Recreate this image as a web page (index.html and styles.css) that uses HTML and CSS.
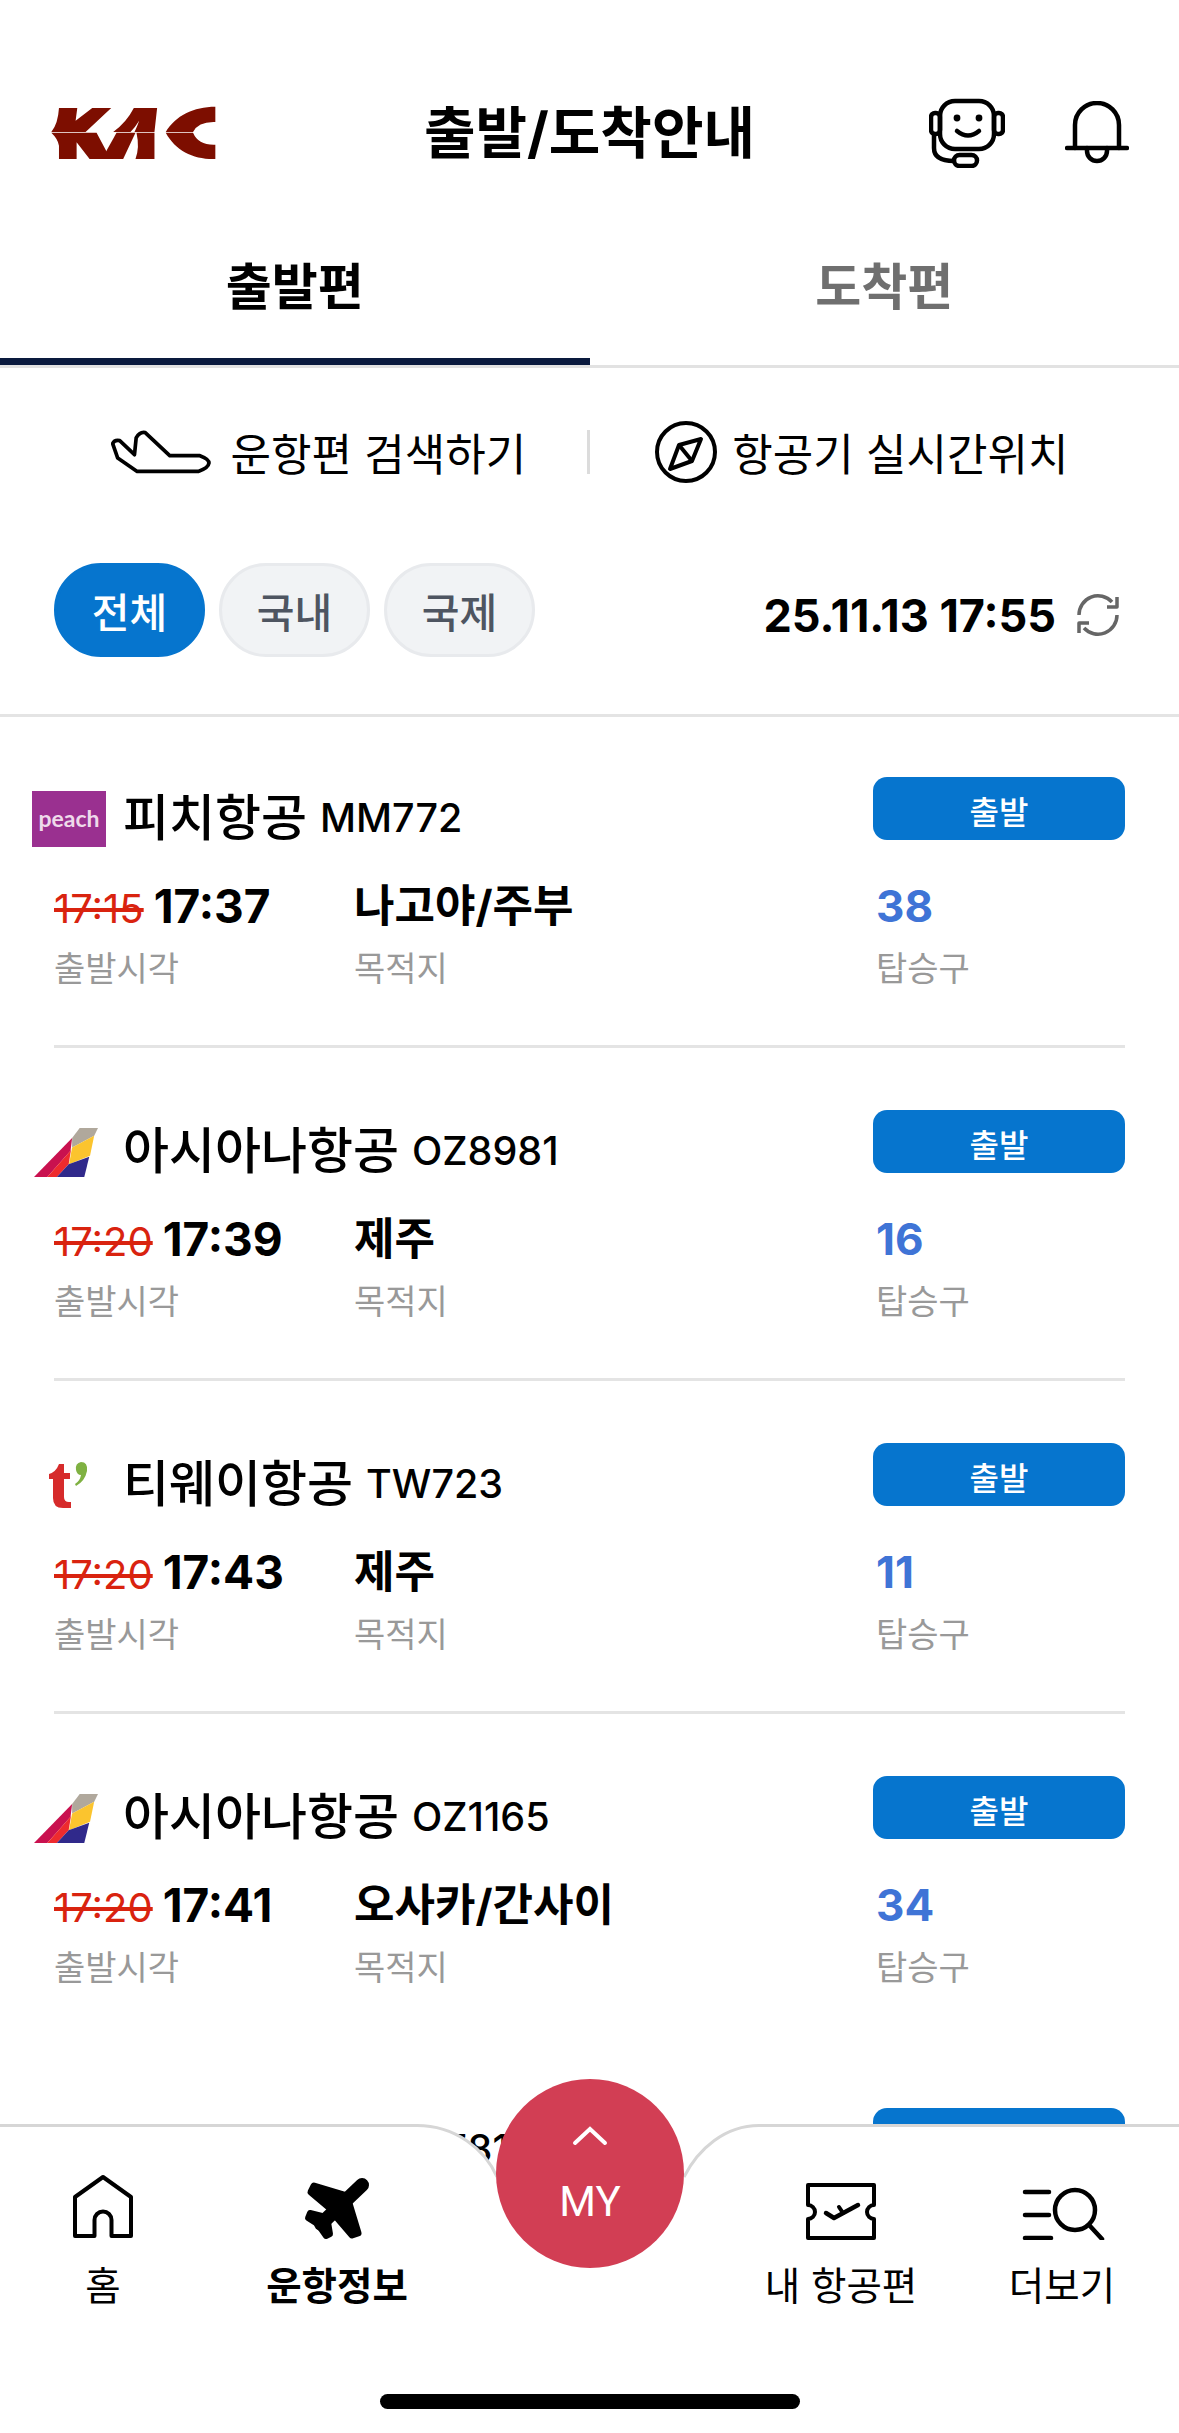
FILE: index.html
```html
<!DOCTYPE html>
<html lang="ko">

<head>
    <meta charset="UTF-8">
    <meta name="viewport" content="width=device-width, initial-scale=1.0">
    <link rel="stylesheet" href="styles.css">
    <title>출발/도착안내</title>
</head>

<body>
    <svg class="defs" width="0" height="0">
        <symbol id="asiana" viewBox="90 82 168 146" preserveAspectRatio="none">
            <polygon points="210,82 258,82 248,105 190,140 190,112" fill="#b0a89c" />
            <polygon points="190,140 248,105 237,165 182,190" fill="#fbc42e" />
            <polygon points="90,228 190,112 186,150 125,228" fill="#c9114f" />
            <polygon points="125,228 187,148 181,190 150,228" fill="#ee2b2e" />
            <polygon points="150,228 181,190 235,168 222,228" fill="#30298b" />
        </symbol>
    </svg>
    <div class="page">
        <header class="header">
            <svg class="kac" viewBox="88 56 502 162" fill="#7d0e00">
                <path d="M115 62H170L165 100L215 62H272L195 134H92Q112 110 115 62Z" />
                <path d="M278 134Q318 105 340 62H410L402 134H342Q352 112 356 100Q345 118 330 134Z" />
                <path d="M436 134C465 85 520 58 585 58V104Q534 102 518 134Z" />
                <path d="M92 136H228L270 215H207L168 165V215H115V175Q112 155 92 136Z" />
                <path d="M244 215L288 136H345L308 215Z" />
                <path d="M348 136H402V215H345Q358 180 348 136Z" />
                <path d="M436 136H518Q534 174 585 172V215C520 217 465 190 436 136Z" />
            </svg>
            <h1 class="title">출발/도착안내</h1>
            <div class="header-icons">
                <svg class="ic-agent" width="76" height="70" viewBox="0 0 76 70" fill="none" stroke="#000" stroke-width="4.5" stroke-linecap="round">
                    <rect x="11" y="3" width="54" height="48" rx="15" />
                    <rect x="2" y="15" width="9" height="21" rx="4" />
                    <rect x="65" y="15" width="9" height="21" rx="4" />
                    <circle cx="28" cy="20" r="3.4" fill="#000" stroke="none" />
                    <circle cx="50" cy="20" r="3.4" fill="#000" stroke="none" />
                    <path d="M28 33Q39 42 50 33" />
                    <path d="M5 36V50Q5 63 25 63" />
                    <rect x="25" y="57" width="23" height="11" rx="5.5" />
                </svg>
                <svg class="ic-bell" width="64" height="64" viewBox="0 0 64 64" fill="none" stroke="#000" stroke-width="4.5" stroke-linecap="round">
                    <path d="M10 47V24A22 22 0 0 1 54 24V47" />
                    <path d="M2 47H62" />
                    <path d="M22 47V50A10 10 0 0 0 42 50V47" />
                </svg>
            </div>
        </header>

        <nav class="tabs">
            <div class="tab active">출발편</div>
            <div class="tab">도착편</div>
        </nav>

        <div class="search-row">
            <div class="search-item">
                <svg width="100" height="44" viewBox="30 64 298 126" fill="none" stroke="#000" stroke-width="11" stroke-linejoin="round">
                    <path d="M35 102Q40 90 56 93L100 135L105 85Q115 66 132 69L205 138H295Q322 148 322 160Q320 175 290 185H108L50 145Z" />
                </svg>
                <span>운항편 검색하기</span>
            </div>
            <div class="search-sep"></div>
            <div class="search-item compass">
                <svg width="64" height="64" viewBox="0 0 64 64" fill="none" stroke="#000" stroke-width="4" stroke-linejoin="round">
                    <circle cx="32" cy="32" r="29" />
                    <path d="M47 19L25 25L16 49L38 41Z" />
                    <path d="M25 25L38 41" />
                </svg>
                <span>항공기 실시간위치</span>
            </div>
        </div>

        <div class="filter-row">
            <button class="chip on">전체</button>
            <button class="chip">국내</button>
            <button class="chip">국제</button>
            <div class="stamp">
                <span>25.11.13 17:55</span>
                <svg width="48" height="44" viewBox="0 0 48 44" fill="none" stroke="#666" stroke-width="3.5" stroke-linejoin="round">
                    <path d="M5 22A19 19 0 0 1 38 9" />
                    <path d="M43 4V14H33" />
                    <path d="M43 22A19 19 0 0 1 10 35" />
                    <path d="M5 40V30H15" />
                </svg>
            </div>
        </div>

        <div class="flights">
            <section class="flight">
                <div class="flight-head">
                    <div class="airline">
                        <div class="logo"><div class="peach"><span>peach</span></div></div>
                        <span class="name">피치항공</span><span class="code">MM772</span>
                    </div>
                    <div class="badge">출발</div>
                </div>
                <div class="flight-body">
                    <div>
                        <div class="value"><s class="old">17:15</s><span class="now">17:37</span></div>
                        <div class="label">출발시각</div>
                    </div>
                    <div>
                        <div class="value dest">나고야/주부</div>
                        <div class="label">목적지</div>
                    </div>
                    <div>
                        <div class="value gate">38</div>
                        <div class="label">탑승구</div>
                    </div>
                </div>
            </section>

            <section class="flight">
                <div class="flight-head">
                    <div class="airline">
                        <div class="logo"><svg class="asiana"><use href="#asiana" /></svg></div>
                        <span class="name">아시아나항공</span><span class="code">OZ8981</span>
                    </div>
                    <div class="badge">출발</div>
                </div>
                <div class="flight-body">
                    <div>
                        <div class="value"><s class="old">17:20</s><span class="now">17:39</span></div>
                        <div class="label">출발시각</div>
                    </div>
                    <div>
                        <div class="value dest">제주</div>
                        <div class="label">목적지</div>
                    </div>
                    <div>
                        <div class="value gate">16</div>
                        <div class="label">탑승구</div>
                    </div>
                </div>
            </section>

            <section class="flight">
                <div class="flight-head">
                    <div class="airline">
                        <div class="logo">
                            <svg class="tway" width="40" height="48" viewBox="0 0 40 48">
                                <path d="M10 3L15 3V12H21V18H15V36Q15 41 20 41H22V47H14Q4 47 4 37V18H0V13Q7 11 10 3Z" fill="#d62b2b" />
                                <path d="M27 25Q36 20 38 10Q39 1 32 1Q26 2 27 9Q28 14 32 14Q31 20 26 23Z" fill="#7fb142" />
                            </svg>
                        </div>
                        <span class="name">티웨이항공</span><span class="code">TW723</span>
                    </div>
                    <div class="badge">출발</div>
                </div>
                <div class="flight-body">
                    <div>
                        <div class="value"><s class="old">17:20</s><span class="now">17:43</span></div>
                        <div class="label">출발시각</div>
                    </div>
                    <div>
                        <div class="value dest">제주</div>
                        <div class="label">목적지</div>
                    </div>
                    <div>
                        <div class="value gate">11</div>
                        <div class="label">탑승구</div>
                    </div>
                </div>
            </section>

            <section class="flight last">
                <div class="flight-head">
                    <div class="airline">
                        <div class="logo"><svg class="asiana"><use href="#asiana" /></svg></div>
                        <span class="name">아시아나항공</span><span class="code">OZ1165</span>
                    </div>
                    <div class="badge">출발</div>
                </div>
                <div class="flight-body">
                    <div>
                        <div class="value"><s class="old">17:20</s><span class="now">17:41</span></div>
                        <div class="label">출발시각</div>
                    </div>
                    <div>
                        <div class="value dest">오사카/간사이</div>
                        <div class="label">목적지</div>
                    </div>
                    <div>
                        <div class="value gate">34</div>
                        <div class="label">탑승구</div>
                    </div>
                </div>
            </section>

            <section class="flight">
                <div class="flight-head">
                    <div class="airline">
                        <div class="logo"><svg class="asiana"><use href="#asiana" /></svg></div>
                        <span class="name">아시아나항공</span><span class="code">OZ8185</span>
                    </div>
                    <div class="badge">출발</div>
                </div>
            </section>
        </div>

        <div class="bottom-nav">
            <svg class="nav-bg" width="1179" height="309" viewBox="0 0 1179 309">
                <path d="M0 1.5H417C455 1.5 485 25 497 53H684C698 25 725 1.5 759 1.5H1179V309H0Z" fill="#fff" />
                <path d="M0 1.5H417C455 1.5 485 25 497 53" fill="none" stroke="#d6d6d6" stroke-width="3" />
                <path d="M684 53C698 25 725 1.5 759 1.5H1179" fill="none" stroke="#d6d6d6" stroke-width="3" />
            </svg>
            <div class="my-btn">
                <svg width="36" height="20" viewBox="0 0 36 20" fill="none" stroke="#fff" stroke-width="4" stroke-linecap="round">
                    <path d="M3 17L18 3L33 17" />
                </svg>
                <span>MY</span>
            </div>
            <div class="nav-items">
                <div class="nav-item">
                    <svg width="90" height="66" viewBox="0 0 90 66" fill="none" stroke="#000" stroke-width="4" stroke-linejoin="round">
                        <path d="M17 23L45 3L73 23V62H53.500V46A8.500 8.500 0 0 0 36.500 46V62H17Z" />
                    </svg>
                    <span>홈</span>
                </div>
                <div class="nav-item on">
                    <svg width="90" height="66" viewBox="0 0 90 66" fill="#000" stroke="#000" stroke-linejoin="round" stroke-linecap="round">
                        <path d="M70 11L29 50" fill="none" stroke-width="14" />
                        <polygon points="52,21 22,12 19,18 38,34" stroke-width="7" />
                        <polygon points="56,26 66,59 60,61 42,40" stroke-width="7" />
                        <polygon points="30,42 18,39 16,44 27,51" stroke-width="6" />
                        <polygon points="36,48 38,60 34,62 27,52" stroke-width="6" />
                    </svg>
                    <span>운항정보</span>
                </div>
                <div class="nav-spacer"></div>
                <div class="nav-item">
                    <svg width="90" height="66" viewBox="0 0 90 66" fill="none" stroke="#000" stroke-width="4" stroke-linejoin="round" stroke-linecap="round">
                        <path d="M12 11H78V31A7 7 0 0 0 78 45V64H12V45A7 7 0 0 0 12 31Z" />
                        <path d="M30 39L38 44L62 31" stroke-width="4.500" />
                        <path d="M43 33L47 39" />
                    </svg>
                    <span>내 항공편</span>
                </div>
                <div class="nav-item">
                    <svg width="90" height="66" viewBox="0 0 90 66" fill="none" stroke="#000" stroke-width="4.500" stroke-linecap="round">
                        <path d="M8 18H32" />
                        <path d="M8 41H32" />
                        <path d="M8 64H34" />
                        <circle cx="58" cy="36" r="20" />
                        <path d="M73 52L85 65" />
                    </svg>
                    <span>더보기</span>
                </div>
            </div>
            <div class="home-bar"></div>
        </div>
    </div>
</body>

</html>
```
FILE: styles.css
```css
* {
    box-sizing: border-box;
}

body {
    margin: 0;
    background: #fff;
    color: #000;
    font-family: Inter, "Noto Sans CJK KR", sans-serif;
}

.defs {
    position: absolute;
}

.page {
    position: relative;
    width: 1179px;
    height: 2433px;
    overflow: hidden;
}

/* header */
.header {
    display: grid;
    grid-template-columns: 1fr auto 1fr;
    align-items: center;
    height: 114px;
    margin-top: 76px;
    padding: 0 50px;
}

.kac {
    width: 167px;
    height: 54px;
}

.title {
    margin: 0;
    font-size: 56px;
    font-weight: 700;
    line-height: 114px;
}

.header-icons {
    display: flex;
    align-items: center;
    justify-content: flex-end;
    gap: 60px;
}

/* tabs */
.tabs {
    display: flex;
    height: 178px;
    border-bottom: 3px solid #e2e2e2;
}

.tab {
    flex: 1;
    padding-top: 62px;
    text-align: center;
    font-size: 50px;
    font-weight: 700;
    line-height: 70px;
    color: #6f6f6f;
}

.tab.active {
    color: #000;
    height: 175px;
    border-bottom: 7px solid #0a1a3e;
}

/* search links */
.search-row {
    display: flex;
    align-items: center;
    justify-content: center;
    gap: 64px;
    height: 168px;
    font-size: 44px;
}

.search-item {
    display: flex;
    align-items: center;
    gap: 20px;
}

.search-item.compass {
    gap: 14px;
}

.search-sep {
    width: 3px;
    height: 44px;
    margin-left: -3px;
    background: #dcdcdc;
}

/* filter chips */
.filter-row {
    display: flex;
    align-items: center;
    gap: 14px;
    margin-top: 27px;
    padding: 0 57px 0 54px;
}

.chip {
    width: 151px;
    height: 94px;
    padding: 0;
    border: solid 3px #e8eaed;
    border-radius: 47px;
    background: #f1f3f5;
    color: #4e5561;
    font-family: inherit;
    font-size: 41px;
    font-weight: 500;
}

.chip.on {
    border-color: #0675ce;
    background: #0675ce;
    color: #fff;
}

.stamp {
    display: flex;
    align-items: center;
    gap: 18px;
    margin-top: 10px;
    margin-left: auto;
    font-size: 45px;
    font-weight: 700;
}

/* flight list */
.flights {
    margin-top: 57px;
    border-top: 3px solid #e4e4e4;
}

.flight {
    margin: 0 54px;
    padding: 62px 0 54px;
    border-bottom: 3px solid #e4e4e4;
}

.flight:first-child {
    padding-top: 60px;
}

.flight.last {
    border-bottom: 0;
    padding-bottom: 56px;
}

.flight-head {
    display: flex;
    justify-content: space-between;
    height: 63px;
}

.airline {
    display: flex;
    align-items: center;
    height: 82px;
    margin-left: -23px;
}

.logo {
    display: flex;
    align-items: center;
    justify-content: center;
    width: 76px;
    height: 60px;
    margin-top: 2px;
    margin-right: 16px;
}

.peach {
    display: flex;
    align-items: center;
    justify-content: center;
    width: 74px;
    height: 56px;
    padding-bottom: 3px;
    background: #9a3090;
    color: #eed9ea;
    font-family: Lato, sans-serif;
    font-size: 23px;
    font-weight: 700;
}

.asiana {
    width: 64px;
    height: 49px;
    margin-left: -6px;
}

.name {
    font-size: 50px;
    font-weight: 500;
    line-height: 60px;
}

.code {
    margin-left: 13px;
    font-size: 39.5px;
    font-weight: 500;
    line-height: 60px;
}

.badge {
    width: 252px;
    height: 63px;
    border-radius: 14px;
    background: #0675ce;
    color: #fff;
    text-align: center;
    font-size: 32px;
    font-weight: 500;
    line-height: 72px;
}

.flight-body {
    display: grid;
    grid-template-columns: 300px 522px auto;
    margin-top: 38px;
}

.value {
    height: 56px;
    font-size: 44px;
    font-weight: 700;
    line-height: 56px;
    white-space: nowrap;
}

.old {
    margin-right: 10px;
    color: #d9230f;
    font-size: 40px;
    font-weight: 400;
}

.now {
    font-size: 46px;
}

.gate {
    color: #3f74d6;
}

.label {
    margin-top: 13px;
    color: #999;
    font-size: 34px;
    line-height: 44px;
}

/* bottom navigation */
.bottom-nav {
    position: absolute;
    left: 0;
    right: 0;
    bottom: 0;
    height: 309px;
}

.nav-bg {
    position: absolute;
    left: 0;
    top: 0;
}

.my-btn {
    position: absolute;
    left: 496px;
    top: -45px;
    display: flex;
    flex-direction: column;
    align-items: center;
    width: 188px;
    height: 189px;
    padding-top: 47px;
    border-radius: 50%;
    background: #d23e54;
    color: #fff;
    font-family: Roboto, sans-serif;
    font-size: 42px;
    line-height: 48px;
}

.my-btn span {
    margin-top: 32px;
}

.nav-items {
    position: relative;
    display: grid;
    grid-template-columns: 206px 262px 254px 238px 204px;
    padding-top: 50px;
}

.nav-item {
    display: flex;
    flex-direction: column;
    align-items: center;
    gap: 23px;
    font-size: 38.5px;
    line-height: 46px;
    white-space: nowrap;
}

.nav-item.on {
    font-weight: 700;
}

.home-bar {
    position: absolute;
    left: 380px;
    bottom: 24px;
    width: 420px;
    height: 15px;
    border-radius: 8px;
    background: #000;
}
```
